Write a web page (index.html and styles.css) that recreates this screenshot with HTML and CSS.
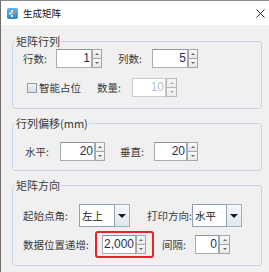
FILE: index.html
```html
<!DOCTYPE html>
<html lang="zh-CN">
<head>
<meta charset="utf-8">
<title>生成矩阵</title>
<link rel="stylesheet" href="styles.css">
</head>
<body>
<div class="window">
  <div class="titlebar">
    <svg class="app-icon" width="11" height="11" viewBox="0 0 11 11">
      <defs>
        <linearGradient id="ig" x1="0" y1="0" x2="0" y2="1">
          <stop offset="0" stop-color="#5db3f0"/>
          <stop offset="1" stop-color="#2a86d8"/>
        </linearGradient>
      </defs>
      <rect x="0" y="0" width="11" height="11" rx="2" fill="url(#ig)"/>
      <rect x="4" y="2" width="2" height="2" fill="#e6f3ff"/>
      <rect x="2" y="4.5" width="2" height="2" fill="#e6f3ff"/>
      <rect x="4" y="7" width="2" height="2" fill="#e6f3ff"/>
      <rect x="4.5" y="4.5" width="1.5" height="1.5" fill="#cfe6fb"/>
      <circle cx="7.8" cy="4.6" r="1.3" fill="#f07a3a"/>
    </svg>
    <span class="title">生成矩阵</span>
    <svg class="close" width="9" height="9" viewBox="0 0 9 9">
      <path d="M0.5 0.5 L8.5 8.5 M8.5 0.5 L0.5 8.5" stroke="#222" stroke-width="1"/>
    </svg>
  </div>

  <div class="content">
    <div class="group g1">
      <span class="legend">矩阵行列</span>
      <div class="row">
        <span class="lbl w33">行数:</span>
        <div class="spin"><span class="field f36">1</span><span class="btns"><i class="up"></i><i class="dn"></i></span></div>
        <span class="lbl w34 gap16">列数:</span>
        <div class="spin"><span class="field f36">5</span><span class="btns"><i class="up"></i><i class="dn"></i></span></div>
      </div>
      <div class="row row2">
        <span class="chk"></span>
        <span class="chk-text">智能占位</span>
        <span class="lbl w35 gap14">数量:</span>
        <div class="spin disabled"><span class="field f34">10</span><span class="btns w11"><i class="up"></i><i class="dn"></i></span></div>
      </div>
    </div>

    <div class="group g2">
      <span class="legend">行列偏移(mm)</span>
      <div class="row indent2">
        <span class="lbl w35">水平:</span>
        <div class="spin"><span class="field f35">20</span><span class="btns"><i class="up"></i><i class="dn"></i></span></div>
        <span class="lbl w34 gap15">垂直:</span>
        <div class="spin"><span class="field f33">20</span><span class="btns w11"><i class="up"></i><i class="dn"></i></span></div>
      </div>
    </div>

    <div class="group g3">
      <span class="legend">矩阵方向</span>
      <div class="row crow">
        <span class="lbl w56">起始点角:</span>
        <div class="combo"><span class="val v36">左上</span><span class="arrow"></span></div>
        <span class="lbl w45 gap17">打印方向:</span>
        <div class="combo"><span class="val v35">水平</span><span class="arrow"></span></div>
      </div>
      <div class="row hrow">
        <span class="lbl w72">数据位置递增:</span>
        <div class="hl">
          <div class="spin"><span class="field f34">2,000</span><span class="btns"><i class="up"></i><i class="dn"></i></span></div>
        </div>
        <span class="lbl w33 gap8">间隔:</span>
        <div class="spin"><span class="field f24">0</span><span class="btns w11"><i class="up"></i><i class="dn"></i></span></div>
      </div>
    </div>
  </div>
</div>
</body>
</html>
```

FILE: styles.css
```css
* { box-sizing: border-box; }

html, body {
  margin: 0;
  padding: 0;
}

body {
  width: 269px;
  height: 272px;
  overflow: hidden;
  background: #f0f0f0;
  font-family: "Noto Sans CJK SC", "Noto Sans", sans-serif;
  font-size: 10.5px;
  color: #3a3a3a;
}

.window {
  height: 272px;
  border-left: 1px solid #6e6e6e;
  border-top: 1px solid #8a8a8a;
  background: #f0f0f0;
}

.titlebar {
  height: 24px;
  background: #fff;
  display: flex;
  align-items: center;
  padding: 0 4px 0 6px;
}

.app-icon { display: block; }

.title {
  margin-left: 5px;
  font-size: 9.5px;
  line-height: 12px;
  color: #111;
}

.close {
  display: block;
  margin-left: auto;
}

.content {
  padding: 16px 0 0 11px;
}

.group {
  position: relative;
  width: 250px;
  border: 1px solid #c8d6e4;
  border-radius: 3px;
  padding: 7px 0 11px 10px;
}

.g2 { margin-top: 14px; padding: 18px 0 9px 10px; }
.g3 { margin-top: 14px; padding: 18px 0 7px 10px; }

.legend {
  position: absolute;
  top: -8px;
  left: 2px;
  padding: 0 1px;
  background: #f0f0f0;
  font-size: 11px;
  line-height: 14px;
  color: #3a3a3a;
}

.row {
  display: flex;
  align-items: center;
  height: 19px;
}

.row2 { margin-top: 10px; padding-left: 4px; }
.indent2 { padding-left: 2px; }
.crow { height: 23px; }
.hrow { height: 27px; margin-top: 4px; }

.lbl {
  flex: none;
  line-height: 14px;
  white-space: nowrap;
}

.w33 { width: 33px; }
.w34 { width: 34px; }
.w35 { width: 35px; }
.w45 { width: 45px; }
.w56 { width: 56px; }
.w72 { width: 72px; }

.gap8 { margin-left: 8px; }
.gap14 { margin-left: 14px; }
.gap15 { margin-left: 15px; }
.gap16 { margin-left: 16px; }
.gap17 { margin-left: 17px; }

/* spinner */
.spin {
  display: flex;
  height: 19px;
  flex: none;
}

.field {
  display: block;
  height: 19px;
  border: 1px solid #a4acb6;
  border-top-color: #8c96a2;
  background: #fff;
  text-align: right;
  padding-right: 1px;
  font-family: "Liberation Sans", Arial, sans-serif;
  font-size: 12px;
  line-height: 17px;
  color: #1f2d57;
}

.f24 { width: 24px; }
.f33 { width: 33px; }
.f34 { width: 34px; }
.f35 { width: 35px; }
.f36 { width: 36px; }

.btns {
  display: flex;
  flex-direction: column;
  width: 10px;
  height: 19px;
}

.btns.w11 { width: 11px; }

.btns i {
  position: relative;
  display: block;
  flex: 1;
  border: 1px solid #a6a6a6;
  background: linear-gradient(#f8f8f8, #e8e8e8);
}

.btns i + i { border-top: none; }

.btns i::after {
  content: "";
  position: absolute;
  left: 50%;
  top: 50%;
  margin-left: -2px;
  margin-top: -1px;
  border-left: 2px solid transparent;
  border-right: 2px solid transparent;
}

.btns .up::after { border-bottom: 2px solid #666; }
.btns .dn::after { border-top: 2px solid #666; }

.disabled .field {
  border-color: #c4cbd3;
  color: #b3c4da;
}

.disabled .btns i {
  border-color: #b8b8b8;
  background: linear-gradient(#f6f6f6, #ececec);
}

.disabled .btns i::after { opacity: 0.5; }

/* checkbox */
.chk {
  flex: none;
  width: 10px;
  height: 10px;
  border: 1px solid #8d9cae;
  background: linear-gradient(#eef2f6, #d6dfe9);
}

.chk-text {
  margin-left: 2px;
  width: 44px;
  line-height: 14px;
  white-space: nowrap;
}

/* combo */
.combo {
  display: flex;
  height: 23px;
  flex: none;
}

.val {
  display: block;
  border: 1px solid #8fa0b3;
  background: #fff;
  padding-left: 2px;
  line-height: 21px;
  color: #222;
}

.v35 { width: 35px; }
.v36 { width: 36px; }

.arrow {
  display: flex;
  align-items: center;
  justify-content: center;
  width: 15px;
  border: 1px solid #9fb0c2;
  border-left: none;
  background: linear-gradient(#f5f8fb, #dfe7ef);
}

.arrow::after {
  content: "";
  border-left: 4px solid transparent;
  border-right: 4px solid transparent;
  border-top: 4px solid #1a1a1a;
}

/* red highlight */
.hl {
  display: flex;
  align-items: center;
  width: 59px;
  height: 27px;
  padding: 0 5px;
  border: 2px solid #e7242b;
  border-radius: 3px;
  flex: none;
}
```
